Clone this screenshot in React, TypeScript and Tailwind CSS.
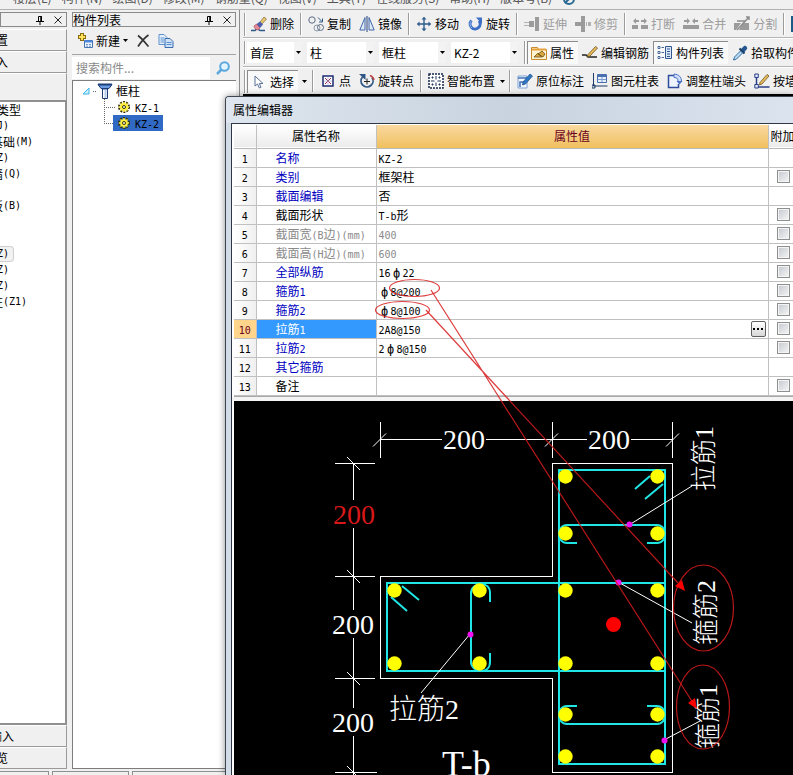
import { ReactNode } from "react";
import clsx from "clsx";

interface Row {
    name: string;
    value: string;
    kind?: "blue" | "gray";
    check?: boolean;
}

const menus = ["楼层(L)", "构件(N)", "绘图(D)", "修改(M)", "钢筋量(Q)", "视图(V)", "工具(T)", "在线服务(S)", "帮助(H)", "版本号(B)"];

const rows: Row[] = [
    { name: "名称", value: "KZ-2", kind: "blue" },
    { name: "类别", value: "框架柱", kind: "blue", check: true },
    { name: "截面编辑", value: "否", kind: "blue" },
    { name: "截面形状", value: "T-b形", check: true },
    { name: "截面宽(B边)(mm)", value: "400", kind: "gray", check: true },
    { name: "截面高(H边)(mm)", value: "600", kind: "gray", check: true },
    { name: "全部纵筋", value: "16ф22", kind: "blue", check: true },
    { name: "箍筋1", value: "ф8@200", kind: "blue", check: true },
    { name: "箍筋2", value: "ф8@100", kind: "blue", check: true },
    { name: "拉筋1", value: "2A8@150", kind: "blue", check: true },
    { name: "拉筋2", value: "2ф8@150", kind: "blue", check: true },
    { name: "其它箍筋", value: "", kind: "blue" },
    { name: "备注", value: "", check: true },
];

const bars = [
    [565.5, 476.5], [657.5, 476.5], [565.5, 533.5], [657.5, 533.5],
    [394.5, 590.5], [479.5, 590.5], [565.5, 590.5], [657.5, 590.5],
    [394.5, 663.5], [479.5, 663.5], [565.5, 663.5], [657.5, 663.5],
    [565.5, 714.5], [657.5, 714.5], [565.5, 756.5], [657.5, 756.5],
];

// half-width latin next to full-width chinese
function Mixed({ text }: { text: string }) {
    return (
        <>
            {text.split(/([\x20-\x7e]+|ф)/).filter(Boolean).map((part, i) => {
                if (part === "ф") return <span key={i} className="inline-block w-3 text-center font-['DejaVu_Sans_Mono',monospace] leading-none">{part}</span>
                if (/^[\x20-\x7e]/.test(part)) return <span key={i} className="font-['DejaVu_Sans_Mono','Liberation_Mono',monospace] text-[10px] leading-none">{part}</span>
                return <span key={i}>{part}</span>
            })}
        </>
    )
}

function Icon({ children, className }: { children: ReactNode, className?: string }) {
    return <svg viewBox="0 0 16 16" fill="none" className={clsx("h-4 w-4 shrink-0", className)}>{children}</svg>
}

const EraserIcon = () => (
    <Icon>
        <path d="M0 14.5h4l2-2 3 2h5" stroke="#2d5a86" strokeWidth="1.5" />
        <path d="M9 6l4-5 2.500 2-4.500 5z" fill="#e9c46b" stroke="#7d6a3a" strokeWidth=".7" />
        <path d="M5 8.500l4-3 3 3-3 3.500z" fill="#4a5fb0" />
        <path d="M3 10l2.500-2 3.500 4-2 2c-2 0-4-2-4-4z" fill="#e58a96" stroke="#a04a5c" strokeWidth=".6" />
    </Icon>
)

const CopyIcon = () => (
    <Icon>
        <circle cx="4" cy="4" r="3.200" stroke="#5a6b85" />
        <circle cx="9" cy="12" r="3" stroke="#8b98ab" />
        <circle cx="12.500" cy="11.500" r="3" stroke="#5a6b85" />
        <path d="M10 1.500l4 4M14.500 2.500v3.500H11" stroke="#2d5a86" />
    </Icon>
)

const MirrorIcon = () => (
    <Icon>
        <path d="M6 1.500V14H.8zM10 1.500V14h5.200z" fill="#dfe9f7" stroke="#4066a8" />
        <path d="M8 0v16" stroke="#20417a" />
    </Icon>
)

const MoveIcon = () => (
    <Icon>
        <path d="M8 2v12M2 8h12" stroke="#2f5a8c" strokeWidth="1.400" />
        <path d="M5.500 3.500L8 .8l2.500 2.700zM5.500 12.500L8 15.200l2.500-2.700zM3.500 5.500L.8 8l2.700 2.500zM12.500 5.500L15.200 8l-2.700 2.500z" fill="#2f5a8c" />
    </Icon>
)

const RotateIcon = () => (
    <Icon>
        <path d="M4.500 4.500a5 5 0 1 0 7.500.3" stroke="#3d6fc4" strokeWidth="3" />
        <path d="M9 1.500h6V8z" fill="#3d6fc4" />
        <path d="M4 5a5 5 0 0 0 1 7" stroke="#8fb6ee" />
    </Icon>
)

const ExtendIcon = () => (
    <Icon>
        <path d="M0 6.500h6M0 9.500h6" stroke="#b5b5b5" />
        <path d="M5 5h5v6H5zM11 1h4v14h-4z" fill="#9b9b9b" />
    </Icon>
)

const TrimIcon = () => (
    <Icon>
        <path d="M6 0h4v16H6zM0 6h6v4H0z" fill="#9b9b9b" />
        <path d="M11 6h1v4h-1zM13 6h3v4h-3z" fill="#b0b0b0" />
    </Icon>
)

const BreakIcon = () => (
    <Icon>
        <path d="M0 9h6v4H0zM9 9h7v4H9z" fill="#9b9b9b" />
        <path d="M1 5l3-3v2h3v2H4v2zM15 5l-3-3v2H9v2h3v2z" fill="#9b9b9b" />
    </Icon>
)

const MergeIcon = () => (
    <Icon>
        <path d="M0 9h16v4H0z" fill="#9b9b9b" />
        <path d="M7 5L4 2v2H1v2h3v2zM9 5l3-3v2h3v2h-3v2z" fill="#9b9b9b" />
    </Icon>
)

const SplitIcon = () => (
    <Icon>
        <path d="M0 7h7l-5 7H0zM9 7h6v7H5z" fill="#9b9b9b" />
        <path d="M15 1L3 14M3 5h9M12 1h3v3" stroke="#8d8d8d" strokeWidth="1.500" />
    </Icon>
)

const PropIcon = () => (
    <Icon>
        <path d="M.5 2.500h6l1 2h8v10H.5z" fill="#fff3d0" stroke="#c98a2e" />
        <path d="M1 4.500h14" stroke="#e8a03e" strokeWidth="2" />
        <path d="M3 12l4-4 4 4zM7 9l4-3 3 3-2 3z" fill="#d6a640" stroke="#705018" strokeWidth=".8" />
    </Icon>
)

const EditBarIcon = () => (
    <Icon>
        <path d="M0 10h4l2 2h9" stroke="#222" strokeWidth="1.500" />
        <path d="M6 9.500l7.500-8 2 1.500L8 11l-2.500.8z" fill="#e8bd5a" stroke="#6b5220" strokeWidth=".8" />
    </Icon>
)

const ListIcon = () => (
    <Icon>
        <path d="M1 1.500h2v2H1zM1 6.500h2v2H1zM1 11.500h2v2H1zM4.500 2.500H7M4.500 7.500H7M4.500 12.500H7" stroke="#4a6a9a" />
        <path d="M8.500 1.500h6v12h-6z" fill="#dbe8fa" stroke="#31568e" />
        <path d="M10 4h3M10 6.500h3M10 9h3M10 11.500h3" stroke="#31568e" />
    </Icon>
)

const PickIcon = () => (
    <Icon>
        <path d="M9 4l3-3c1-1 4 1 3 3l-3 3.500z" fill="#24578f" />
        <path d="M7.500 3.500l5 5" stroke="#173c66" strokeWidth="2" />
        <path d="M8.500 6l2 2-6 6-3 1 1-3z" fill="#bcdcf5" stroke="#2f6ca5" />
    </Icon>
)

const CursorIcon = () => (
    <Icon>
        <path d="M4 2v10l2.500-2 1.800 4 1.700-.8-1.700-3.700H12z" fill="#fff" stroke="#5a7297" />
    </Icon>
)

const PointIcon = () => (
    <Icon>
        <path d="M3 3h10v10H3z" fill="#fff" stroke="#1c2c70" strokeWidth="1.500" />
        <path d="M5 5l6 6M11 5l-6 6" stroke="#a03050" />
        <path d="M8 4v8M4 8h8" stroke="#9aa5cc" strokeWidth=".6" />
    </Icon>
)

const RotatePointIcon = () => (
    <Icon>
        <path d="M3.500 4a6 6 0 1 0 9.500.5" stroke="#2f5684" strokeWidth="1.800" />
        <path d="M0 1h6.500v6z" fill="#2f5684" />
        <path d="M15 7A6 6 0 0 0 11 2.500" stroke="#c04040" strokeWidth="1.500" />
        <path d="M8 5.500v6M5 8.500h6" stroke="#222" />
    </Icon>
)

const SmartIcon = () => (
    <Icon>
        <path d="M1 1h14v14H1z" fill="#fff" stroke="#14264a" strokeWidth="1.500" strokeDasharray="2 1" />
        <path d="M8 3v3.500M8 9.500V13M3 8h3.500M9.500 8H13M3.500 4.500h2M10.500 4.500h2M3.500 11.500h2M10.500 11.500h2M4.500 3.500v2M11.500 3.500v2M4.500 10.500v2M11.500 10.500v2" stroke="#1b2f55" />
    </Icon>
)

const MarkIcon = () => (
    <Icon>
        <path d="M1 3h9v12H1z" fill="#f4f9ff" stroke="#7ea3d4" />
        <path d="M1 5h9M3 14V9h5" stroke="#4173b5" strokeWidth="1.500" />
        <path d="M6 9l7-8 2.500 2-7 8-3 1z" fill="#2f78c4" stroke="#184a84" strokeWidth=".7" />
    </Icon>
)

const TableIcon = () => (
    <Icon>
        <path d="M1.500 0v13h14M0 12h3v3H0z" stroke="#1d3a68" />
        <path d="M5.500 1.500h9v8h-9z" fill="#e6effb" stroke="#4a6fae" />
        <path d="M6 3h8" stroke="#4a6fae" strokeWidth="2" />
        <path d="M6 6.500h8M10 4v5" stroke="#7e9cce" />
    </Icon>
)

const AdjustIcon = () => (
    <Icon>
        <path d="M7 2.500H1.500v12h10V11" fill="#eef4ff" stroke="#2e4c9a" strokeWidth="1.500" />
        <path d="M7 1v3.500c3 0 4 1 4 4h3.500C14.500 4 12 1.500 7 1z" fill="#cfdffa" stroke="#4a70c4" />
        <path d="M9.500 8h6L12.500 11.500z" fill="#4a70c4" />
    </Icon>
)

const WallIcon = () => (
    <Icon>
        <path d="M2.500 1v13h13" stroke="#2b3f86" strokeWidth="1.500" />
        <path d="M.8 1h3.500v3.500H.8zM.8 11.500h3.500V15H.8z" fill="#dfe9ff" stroke="#2b3f86" />
        <path d="M6 9.500l7-8 2 1.500-7 8-2.500 1z" fill="#e8bd5a" stroke="#6b5220" strokeWidth=".8" />
    </Icon>
)

const NewIcon = () => (
    <Icon>
        <path d="M5 0v8M1 4h8" stroke="#8a6d10" strokeWidth="4" />
        <path d="M5 1v6M2 4h6" stroke="#ffe25a" strokeWidth="2" />
        <path d="M7.500 7.500h8v7h-8z" fill="#eaf2fd" stroke="#4674b5" />
        <path d="M8 8.500h7" stroke="#4c8ae0" strokeWidth="2" />
        <path d="M9 11.500h2M12 11.500h2M9 13.200h2M12 13.200h2" stroke="#7799c8" />
    </Icon>
)

const DeleteIcon = () => (
    <Icon>
        <path d="M3 2.500c4 3 7 7 10.500 11M13.500 2C9 5 6 9 3 13.500" stroke="#333" strokeWidth="1.700" />
    </Icon>
)

const DuplicateIcon = () => (
    <Icon>
        <path d="M1 1.500h5l3 3v7H1z" fill="#e6f0fc" stroke="#5d90cf" />
        <path d="M7 5.500h5l3 3v6H7z" fill="#cfe1f8" stroke="#3a6cb0" />
        <path d="M2.500 5h4M2.500 7h3.500M2.500 9h3.500M8.500 9.500h5M8.500 11.500h5" stroke="#5d90cf" />
    </Icon>
)

const SearchIcon = () => (
    <Icon>
        <circle cx="9.500" cy="6.500" r="4.300" fill="#e2f4ff" stroke="#5aa8de" strokeWidth="2" />
        <path d="M6.500 9.500L2 14" stroke="#5aa8de" strokeWidth="2.500" />
    </Icon>
)

const ColumnIcon = () => (
    <Icon>
        <path d="M1 1.500h14l-3 4H4z" fill="#6b9be0" stroke="#1d3d7a" />
        <path d="M1 1.500h14" stroke="#1d3d7a" strokeWidth="2" />
        <path d="M5.500 6h5v9.500h-5z" fill="#fff" stroke="#1d3d7a" />
        <path d="M8.500 7v8" stroke="#b7cdef" strokeWidth="2" />
    </Icon>
)

const GearIcon = () => (
    <Icon className="mx-px">
        <circle cx="8" cy="8" r="5" stroke="#3a3500" strokeWidth="2" strokeDasharray="2 1.140" />
        <circle cx="8" cy="8" r="3.800" fill="#ffee3a" />
        <path d="M8 3v2M8 11v2M3 8h2M11 8h2M4.500 4.500l1.300 1.300M10.200 10.200l1.300 1.300M4.500 11.500l1.300-1.300M10.200 5.800l1.300-1.300" stroke="#ffee3a" strokeWidth="1.500" />
        <circle cx="8" cy="8" r="1.500" fill="#fff" stroke="#3a3500" />
    </Icon>
)

function Branch({ last }: { last?: boolean }) {
    return (
        <svg className="ml-[31px] h-4 w-[11px] shrink-0" viewBox="0 0 11 16" fill="none" stroke="#666" strokeDasharray="1 1">
            <path d={last ? "M.5 0v8" : "M.5 0v16"} />
            <path d="M0 8.500h11" />
        </svg>
    )
}

function Arrow() {
    return <svg viewBox="0 0 5 3" className="h-[3px] w-[5px] shrink-0"><path d="M0 0h5L2.500 3z" fill="#000" /></svg>
}

function Sep() {
    return <span className="mx-[2px] h-[22px] w-[2px] shrink-0 border-l border-[#9c9c9c] bg-white" />
}

function Handle() {
    return <span className="mx-px h-[23px] w-[2px] shrink-0 border-l border-[#9c9c9c] bg-white" />
}

interface ToolProps {
    icon: ReactNode;
    label: string;
    disabled?: boolean;
    pressed?: boolean;
}

function Tool({ icon, label, disabled, pressed }: ToolProps) {
    return (
        <button
            type="button"
            disabled={disabled}
            aria-pressed={pressed}
            className={clsx(
                "flex h-[23px] shrink-0 items-center gap-[3px] whitespace-nowrap pr-1",
                disabled && "text-[#9d9d9d]",
                pressed ? "border-l border-t border-[#8c8c8c] bg-[#f9f9f9] pl-[3px]" : "pl-1"
            )}
        >
            {icon}
            {label}
        </button>
    )
}

function Combo({ label, value, narrow }: { label: string, value: string, narrow?: boolean }) {
    return (
        <div className={clsx("relative mr-[5px] h-[21px] shrink-0 bg-white", narrow ? "w-[55px]" : "w-[67px]")}>
            <select aria-label={label} className="h-full w-full appearance-none bg-transparent pl-[3px] leading-[20px] outline-none">
                <option>{value}</option>
            </select>
            <span className="pointer-events-none absolute inset-y-0 right-0 flex w-2 items-center justify-center bg-[#f3f3f3]">
                <Arrow />
            </span>
        </div>
    )
}

function PanelHeader({ title }: { title?: string }) {
    return (
        <div className="mt-[2px] flex h-[15px] items-center justify-end border border-[#8a8a8a]">
            {title && <h2 className="flex-1 whitespace-nowrap leading-[13px]">{title}</h2>}
            <button type="button" aria-label="固定" className="mr-[10px]">
                <svg viewBox="0 0 8 10" className="h-[10px] w-2" fill="none" stroke="#000">
                    <path d="M2.500 6V1.500h3V6M0 6.500h8M4 7v3" />
                    <path d="M5 1v5" strokeWidth="1.500" />
                </svg>
            </button>
            <button type="button" aria-label="关闭" className="mr-1">
                <svg viewBox="0 0 8 8" className="h-2 w-2" stroke="#222"><path d="M.5.5l7 7M7.500.5l-7 7" /></svg>
            </button>
        </div>
    )
}

// nav button whose label runs off the left side
function NavButton({ label, className }: { label: string, className: string }) {
    return (
        <button type="button" className="flex h-[22px] shrink-0 items-center border-b border-r border-t border-b-[#9a9a9a] border-r-[#9a9a9a] border-t-white">
            <span className={clsx("flex justify-end overflow-hidden whitespace-nowrap", className)}>{label}</span>
        </button>
    )
}

function NavItem({ text = "", className = "w-[9px]", active }: { text?: string, className?: string, active?: boolean }) {
    return (
        <li className="flex h-4 items-center">
            <span className={clsx(
                "flex h-4 items-center",
                active && "rounded-r-sm border border-l-0 border-[#cfcfcf] bg-[#f2f2f2] pr-1"
            )}>
                <span className={clsx("flex items-center justify-end overflow-hidden whitespace-nowrap", className)}>
                    <Mixed text={text} />
                </span>
            </span>
        </li>
    )
}

function Navigation() {
    return (
        <aside className="flex w-[67px] shrink-0 flex-col">
            <PanelHeader />
            <div className="mt-[2px] flex min-h-0 flex-1 flex-col">
                <NavButton label="设置" className="w-2" />
                <NavButton label="入" className="w-2" />
                <div className="h-[27px] shrink-0 border-r border-t border-r-[#9a9a9a] border-t-white" />
                <ul className="min-h-0 flex-1 border-b-2 border-r-2 border-t-2 border-[#909090] bg-white">
                    <NavItem text="类型" className="w-[21px]" />
                    <NavItem text="(J)" />
                    <NavItem text="基础(M)" className="w-[33px]" />
                    <NavItem text="(Z)" />
                    <NavItem text="墙(Q)" className="w-[21px]" />
                    <NavItem />
                    <NavItem text="板(B)" className="w-[21px]" />
                    <NavItem />
                    <NavItem />
                    <NavItem text="(Z)" active />
                    <NavItem text="(Z)" />
                    <NavItem text="(Z)" />
                    <NavItem text="柱(Z1)" className="w-[27px]" />
                </ul>
                <NavButton label="输入" className="w-[14px]" />
                <NavButton label="预览" className="w-2" />
            </div>
        </aside>
    )
}

function ComponentList() {
    return (
        <section className="ml-[5px] flex w-[164px] shrink-0 flex-col">
            <PanelHeader title="构件列表" />
            <div className="flex h-[27px] shrink-0 items-center pl-[5px]">
                <button type="button" className="flex items-center gap-[3px]">
                    <NewIcon />
                    新建
                    <Arrow />
                </button>
                <button type="button" aria-label="删除构件" className="ml-[7px]"><DeleteIcon /></button>
                <button type="button" aria-label="复制构件" className="ml-[7px]"><DuplicateIcon /></button>
            </div>
            <div className="flex h-[26px] shrink-0 items-center border-t border-[#a5a5a5]">
                <input
                    type="text"
                    aria-label="搜索构件"
                    placeholder="搜索构件..."
                    className="h-[22px] min-w-0 flex-1 bg-white pl-1 outline-none placeholder:text-[#8a8a8a]"
                />
                <button type="button" aria-label="搜索" className="px-[5px]"><SearchIcon /></button>
            </div>
            <ul className="min-h-0 flex-1 border-b border-l border-t border-[#7d7d7d] bg-white pt-[2px]">
                <li>
                    <div className="flex h-4 items-center">
                        <svg viewBox="0 0 20 16" className="ml-1 h-4 w-5 shrink-0" fill="none">
                            <path d="M12 5v6H6z" fill="#c9f0ff" stroke="#3db4e6" />
                            <path d="M16 8.500h4" stroke="#666" strokeDasharray="1 1" />
                        </svg>
                        <ColumnIcon />
                        <span className="ml-[3px]">框柱</span>
                    </div>
                    <ul>
                        <li className="flex h-4 items-center">
                            <Branch />
                            <GearIcon />
                            <span className="ml-[2px] leading-4"><Mixed text="KZ-1" /></span>
                        </li>
                        <li className="flex h-4 items-center">
                            <Branch last />
                            <span className="-ml-[2px] flex h-4 items-center bg-[#316ac5] pl-[2px] pr-1">
                                <GearIcon />
                                <span className="ml-[2px] leading-4"><Mixed text="KZ-2" /></span>
                            </span>
                        </li>
                    </ul>
                </li>
            </ul>
        </section>
    )
}

function Toolbars() {
    return (
        <div className="ml-[3px] min-w-0 flex-1 border-l border-[#8c8c8c] pl-[3px]">
            <div className="flex h-7 items-center overflow-hidden border-b border-[#b5b5b5] pt-px">
                <Handle />
                <Tool icon={<EraserIcon />} label="删除" />
                <Sep />
                <Tool icon={<CopyIcon />} label="复制" />
                <Tool icon={<MirrorIcon />} label="镜像" />
                <Sep />
                <Tool icon={<MoveIcon />} label="移动" />
                <Tool icon={<RotateIcon />} label="旋转" />
                <Sep />
                <Tool icon={<ExtendIcon />} label="延伸" disabled />
                <Tool icon={<TrimIcon />} label="修剪" disabled />
                <Sep />
                <Tool icon={<BreakIcon />} label="打断" disabled />
                <Tool icon={<MergeIcon />} label="合并" disabled />
                <Tool icon={<SplitIcon />} label="分割" disabled />
                <Sep />
                <span className="ml-1 h-4 w-4 shrink-0 bg-[#1d5a86]" />
            </div>
            <div className="flex h-[29px] items-center overflow-hidden border-b border-t border-b-[#b5b5b5] border-t-white">
                <Handle />
                <span className="w-[2px]" />
                <Combo label="楼层" value="首层" narrow />
                <Combo label="构件大类" value="柱" />
                <Combo label="构件类型" value="框柱" />
                <Combo label="构件" value="KZ-2" />
                <Handle />
                <span className="w-px" />
                <Tool icon={<PropIcon />} label="属性" pressed />
                <Tool icon={<EditBarIcon />} label="编辑钢筋" />
                <Tool icon={<ListIcon />} label="构件列表" pressed />
                <Tool icon={<PickIcon />} label="拾取构件" />
            </div>
            <div className="flex h-[27px] items-center overflow-hidden border-t border-t-white">
                <Handle />
                <Tool icon={<CursorIcon />} label="选择" pressed />
                <span className="flex w-3 shrink-0 justify-center"><Arrow /></span>
                <Sep />
                <Tool icon={<PointIcon />} label="点" />
                <Tool icon={<RotatePointIcon />} label="旋转点" />
                <Sep />
                <Tool icon={<SmartIcon />} label="智能布置" />
                <span className="mr-[2px] flex w-[6px] shrink-0 justify-center"><Arrow /></span>
                <Sep />
                <Tool icon={<MarkIcon />} label="原位标注" />
                <Tool icon={<TableIcon />} label="图元柱表" />
                <Tool icon={<AdjustIcon />} label="调整柱端头" />
                <Tool icon={<WallIcon />} label="按墙" />
            </div>
            <div className="h-[3px] bg-black" />
        </div>
    )
}

function PropertyTable() {
    return (
        <table className="w-full table-fixed border-collapse bg-white">
            <colgroup>
                <col className="w-[22px]" />
                <col className="w-[120px]" />
                <col />
                <col className="w-[25px]" />
            </colgroup>
            <thead>
                <tr className="h-[23px] border-b border-[#b9b9b9] bg-linear-to-b from-white to-[#ececec]">
                    <th className="border-r border-[#c0c0c0]" />
                    <th className="border-r border-[#c0c0c0] font-normal">属性名称</th>
                    <th className="border-r border-[#c0c0c0] bg-linear-to-b from-[#f9d99f] to-[#f0c05c] font-normal text-[#6b0020]">属性值</th>
                    <th className="overflow-hidden whitespace-nowrap pl-[2px] text-left font-normal">附加</th>
                </tr>
            </thead>
            <tbody>
                {rows.map((row, i) => {
                    const selected = i === 9;
                    return (
                        <tr key={row.name} className="h-[19px] border-b border-[#c0c0c0] leading-[17px]">
                            <td className={clsx(
                                "border-r border-[#c0c0c0] text-center",
                                selected ? "bg-[#ffd58c] text-[#6b0020]" : "bg-linear-to-r from-white to-[#efefef]"
                            )}>
                                <Mixed text={String(i + 1)} />
                            </td>
                            <td className={clsx(
                                "whitespace-nowrap border-r border-[#c0c0c0] pl-[19px]",
                                selected ? "bg-[#3399ff] text-white" : row.kind === "blue" ? "text-[#0000c0]" : row.kind === "gray" && "text-[#8a8a8a]"
                            )}>
                                <Mixed text={row.name} />
                            </td>
                            <td className={clsx("border-r border-[#c0c0c0] pl-[2px]", row.kind === "gray" && "text-[#8a8a8a]")}>
                                <div className="flex h-[17px] items-center justify-between">
                                    <span><Mixed text={row.value} /></span>
                                    {selected && (
                                        <button type="button" aria-label="更多" className="mr-[2px] flex h-4 w-[15px] items-center justify-center gap-[2px] rounded-xs border border-[#606060] bg-linear-to-b from-white to-[#d8d8d8]">
                                            <span className="h-[2px] w-[2px] bg-black" />
                                            <span className="h-[2px] w-[2px] bg-black" />
                                            <span className="h-[2px] w-[2px] bg-black" />
                                        </button>
                                    )}
                                </div>
                            </td>
                            <td className="pl-2">
                                {row.check && (
                                    <input
                                        type="checkbox"
                                        aria-label={row.name}
                                        className="block h-[13px] w-[13px] appearance-none border border-[#8e8f8f] bg-linear-to-br from-[#c4c8cf] to-[#f6f6f6] shadow-[inset_0_0_0_1px_#f4f4f4]"
                                    />
                                )}
                            </td>
                        </tr>
                    )
                })}
            </tbody>
        </table>
    )
}

function SectionDrawing() {
    return (
        <svg viewBox="234 401 559 374" preserveAspectRatio="xMinYMin slice" className="block h-[374px] w-[559px] bg-black" fill="none">
            <g stroke="#fff" shapeRendering="crispEdges">
                <path d="M552.500 463.500h120v308.500h-120v-93.500h-172v-102h172z" />
                <path d="M380.500 422v36M552.500 422v36M672.500 422v36M380 439.500h62M486 439.500h101M631 439.500h42" />
                <path d="M335 463.500h40M335 576.500h40M335 678.500h40M335 772.500h42M353.500 463v37M353.500 528v82M353.500 638v70M353.500 736v39" />
            </g>
            <g stroke="#fff">
                <path d="M373 446.500l13-13M545 446.500l13-13M666 446.500l13-13" />
                <path d="M347 457l13 13M347 570l13 13M347 672l13 13M347 766l13 13" />
            </g>
            <g stroke="#1fe5e5" strokeWidth="2">
                <path d="M559 470h106v294H559zM387 583h278v88H387z" />
                <path d="M577 543h-10c-5 0-8-4-8-9s3-9 8-9h90c5 0 8 4 8 9s-3 9-8 9h-10" />
                <path d="M577 706h-10c-5 0-8 4-8 9s3 9 8 9h90c5 0 8-4 8-9s-3-9-8-9h-10" />
                <path d="M490 602v-9c0-6-4-9-9-9s-10 4-10 9v69c0 5 5 9 10 9s9-3 9-9v-9" />
                <path d="M650 476l-15 13M663 484l-18 15M402 586l17 14M391 597l16 14" />
            </g>
            <g fill="#ff0">
                {bars.map(([x, y]) => <circle key={`${x}-${y}`} cx={x} cy={y} r="7.200" />)}
            </g>
            <circle cx="613.500" cy="624.500" r="7.500" fill="#f00" />
            <path d="M629 525l63-39M618 582l74 41M470 634l-49 59M664 740l36-19" stroke="#fff" />
            <g fill="#f010f0">
                <circle cx="629.500" cy="524.500" r="3" />
                <circle cx="618.500" cy="582.500" r="3" />
                <circle cx="470.500" cy="634.500" r="3" />
                <circle cx="664.500" cy="740.500" r="3" />
            </g>
            <g fill="#fff" className="font-['Liberation_Serif','Noto_Sans_CJK_SC',serif] text-[28px] font-light">
                <text x="443" y="449">200</text>
                <text x="588" y="449">200</text>
                <text x="333" y="524" fill="#d81818">200</text>
                <text x="332" y="634">200</text>
                <text x="332" y="732">200</text>
                <text x="389" y="719">拉筋2</text>
                <text x="442" y="776" className="text-[36px]">T-b</text>
            </g>
            <g fill="#fff" className="font-['Liberation_Serif','Noto_Sans_CJK_SC',serif] text-[26px] font-light">
                <text transform="translate(713 491) rotate(-90)">拉筋1</text>
                <text transform="translate(715 645) rotate(-90)">箍筋2</text>
                <text transform="translate(717 749) rotate(-90)">箍筋1</text>
            </g>
        </svg>
    )
}

// red marks linking the stirrup values with their place in the section
function Annotations() {
    return (
        <svg viewBox="225 96 568 679" className="pointer-events-none absolute -left-px -top-px h-[679px] w-[568px]" fill="none">
            <g stroke="#d81c1c" strokeOpacity=".85" strokeWidth="1.200">
                <ellipse cx="414.500" cy="288" rx="25" ry="8.500" />
                <ellipse cx="402.500" cy="310" rx="27" ry="8.500" />
                <ellipse cx="703.500" cy="608" rx="30" ry="43" />
                <ellipse cx="703" cy="707" rx="26.500" ry="42" />
                <path d="M431 290l262 413M426 310l252 273" />
            </g>
            <path d="M685 591l-10-5 7-6zM697 709l-9-6 7-5z" fill="#f00" />
        </svg>
    )
}

function PropertyEditor() {
    return (
        <section className="absolute bottom-0 left-[225px] right-0 top-24 flex flex-col overflow-hidden rounded-tl-sm border-l border-t border-[#3c4650] bg-[#d3dde8] shadow-[0_0_7px_rgba(0,0,0,0.45)]">
            <h2 className="flex h-[26px] shrink-0 items-center bg-linear-to-r from-[#dfe6ef] via-[#c8d3df] to-[#dbe3ee] pl-[7px]">属性编辑器</h2>
            <div className="ml-[5px] min-h-0 flex-1 border-l border-t border-[#2f3842] bg-white">
                <div className="ml-[2px] mt-px border-b border-[#a8a8a8]">
                    <PropertyTable />
                </div>
                <div className="h-1 bg-[#f4f4f4]" />
                <div className="ml-[2px] h-full overflow-hidden bg-black">
                    <SectionDrawing />
                </div>
            </div>
            <Annotations />
        </section>
    )
}

function App() {
    return (
        <div className="relative flex h-screen flex-col overflow-hidden bg-[#f0f0f0] font-['Noto_Sans_CJK_SC',sans-serif] text-[12px] leading-4 text-black">
            <nav className="flex h-[10px] shrink-0 items-end gap-[10px] overflow-hidden border-b border-[#b0b0b0] pb-[3px] pl-[13px] text-[#555]">
                {menus.map((menu) => (
                    <button key={menu} type="button" className="shrink-0 whitespace-nowrap">{menu}</button>
                ))}
                <svg viewBox="0 0 14 14" className="h-[14px] w-[14px] shrink-0" fill="none" stroke="#2b6a94" strokeWidth="2">
                    <circle cx="7" cy="7" r="5" />
                    <path d="M3 11l8-8" />
                </svg>
            </nav>
            <main className="flex min-h-0 flex-1">
                <Navigation />
                <ComponentList />
                <Toolbars />
            </main>
            <footer className="mt-[2px] flex h-1 shrink-0 gap-[3px]">
                <span className="w-[49px] border-r border-t border-[#909090]" />
                <span className="w-[77px] border-l border-r border-t border-[#909090]" />
                <span className="flex-1 border-l border-t border-[#909090]" />
            </footer>
            <PropertyEditor />
        </div>
    )
}

export default App;
